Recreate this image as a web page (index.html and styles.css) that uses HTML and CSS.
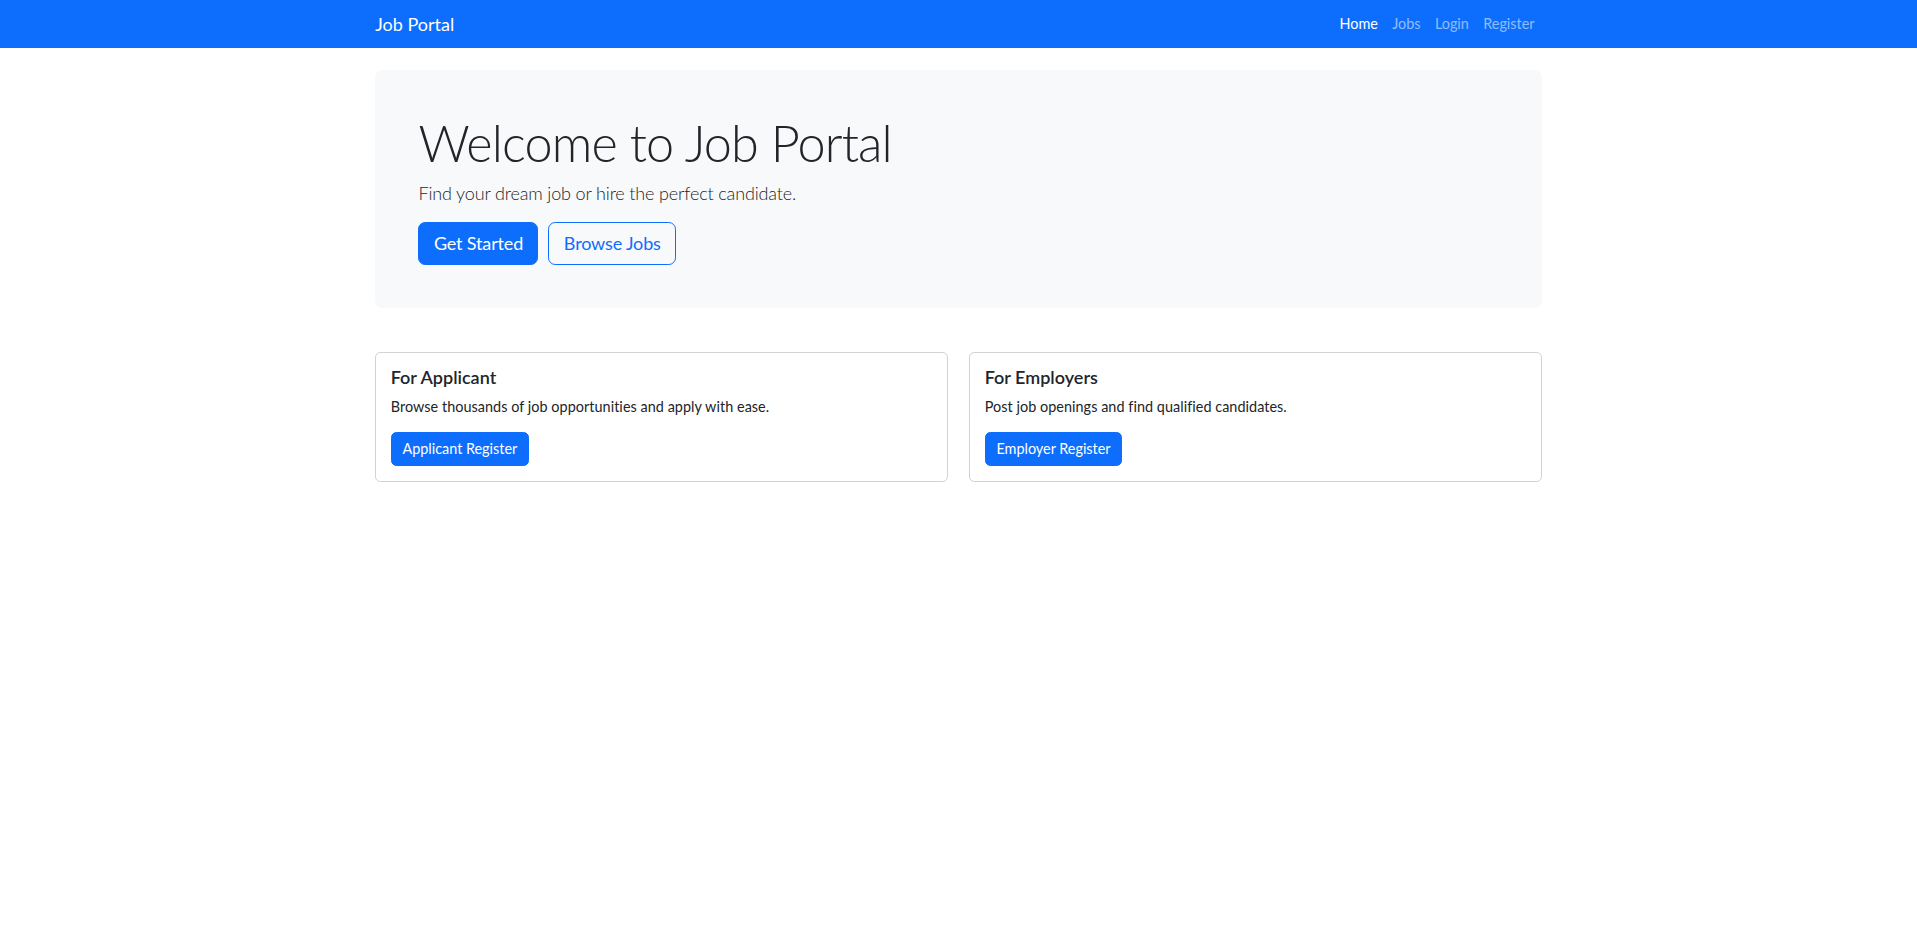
FILE: index.html
```html
<!DOCTYPE html>
<html lang="en">
<head>
<meta charset="utf-8">
<title>Job Portal</title>
<link rel="stylesheet" href="styles.css">
</head>
<body>
<nav class="navbar">
  <div class="container navbar-inner">
    <a class="brand" href="#">Job Portal</a>
    <ul class="nav">
      <li><a class="nav-link active" href="#">Home</a></li>
      <li><a class="nav-link" href="#">Jobs</a></li>
      <li><a class="nav-link" href="#">Login</a></li>
      <li><a class="nav-link" href="#">Register</a></li>
    </ul>
  </div>
</nav>
<main class="container">
  <section class="hero">
    <h1 class="hero-title">Welcome to Job Portal</h1>
    <p class="lead">Find your dream job or hire the perfect candidate.</p>
    <div class="hero-actions">
      <a class="btn btn-lg btn-primary" href="#">Get Started</a>
      <a class="btn btn-lg btn-outline" href="#">Browse Jobs</a>
    </div>
  </section>
  <section class="cards">
    <div class="card">
      <h5 class="card-title">For Applicant</h5>
      <p class="card-text">Browse thousands of job opportunities and apply with ease.</p>
      <div><a class="btn btn-primary" href="#">Applicant Register</a></div>
    </div>
    <div class="card">
      <h5 class="card-title">For Employers</h5>
      <p class="card-text">Post job openings and find qualified candidates.</p>
      <div><a class="btn btn-primary" href="#">Employer Register</a></div>
    </div>
  </section>
</main>
</body>
</html>
```
FILE: styles.css
```css
* { box-sizing: border-box; }
body {
  margin: 0;
  font-family: Lato, "Liberation Sans", sans-serif;
  font-size: 14.4px;
  line-height: 1.5;
  color: #212529;
  background: #fff;
}
a { text-decoration: none; }
.container {
  width: 1188px;
  margin: 0 auto;
  padding: 0 10.8px;
}
.navbar {
  background: #0d6efd;
  height: 48px;
}
.navbar-inner {
  height: 48px;
  display: flex;
  align-items: center;
  justify-content: space-between;
}
.brand {
  color: #fff;
  font-size: 18px;
  line-height: 27px;
}
.nav {
  display: flex;
  list-style: none;
  margin: 0;
  padding: 0;
}
.nav-link {
  display: block;
  padding: 7.2px 7.2px;
  color: rgba(255,255,255,0.55);
  font-size: 14.4px;
}
.nav-link.active { color: #fff; }
.hero {
  margin-top: 21.6px;
  margin-bottom: 43.2px;
  padding: 43.2px;
  background: #f8f9fa;
  border-radius: 7.2px;
}
.hero-title {
  margin: 0 0 7.2px;
  font-size: 50.4px;
  font-weight: 300;
  line-height: 1.2;
  letter-spacing: -0.85px;
}
.lead {
  margin: 0 0 14.4px;
  font-size: 18px;
  font-weight: 300;
  letter-spacing: -0.15px;
}
.hero-actions {
  display: flex;
  gap: 10px;
}
.btn {
  display: inline-block;
  border: 1px solid transparent;
  padding: 5.4px 10.8px;
  font-size: 14.4px;
  line-height: 1.5;
  border-radius: 5.4px;
}
.btn-lg {
  padding: 7.2px 14.4px;
  font-size: 18px;
  border-radius: 7.2px;
  letter-spacing: -0.15px;
}
.btn-primary {
  background: #0d6efd;
  border-color: #0d6efd;
  color: #fff;
}
.btn-outline {
  background: transparent;
  border-color: #0d6efd;
  color: #0d6efd;
}
.cards {
  display: grid;
  grid-template-columns: 1fr 1fr;
  gap: 21.6px;
}
.card {
  border: 1px solid rgba(0,0,0,0.175);
  border-radius: 5.4px;
  padding: 14.4px;
}
.card-title {
  margin: 0 0 7.2px;
  font-size: 18px;
  font-weight: 600;
  line-height: 1.2;
}
.card-text {
  margin: 0 0 14.4px;
  letter-spacing: 0.05px;
}
```
